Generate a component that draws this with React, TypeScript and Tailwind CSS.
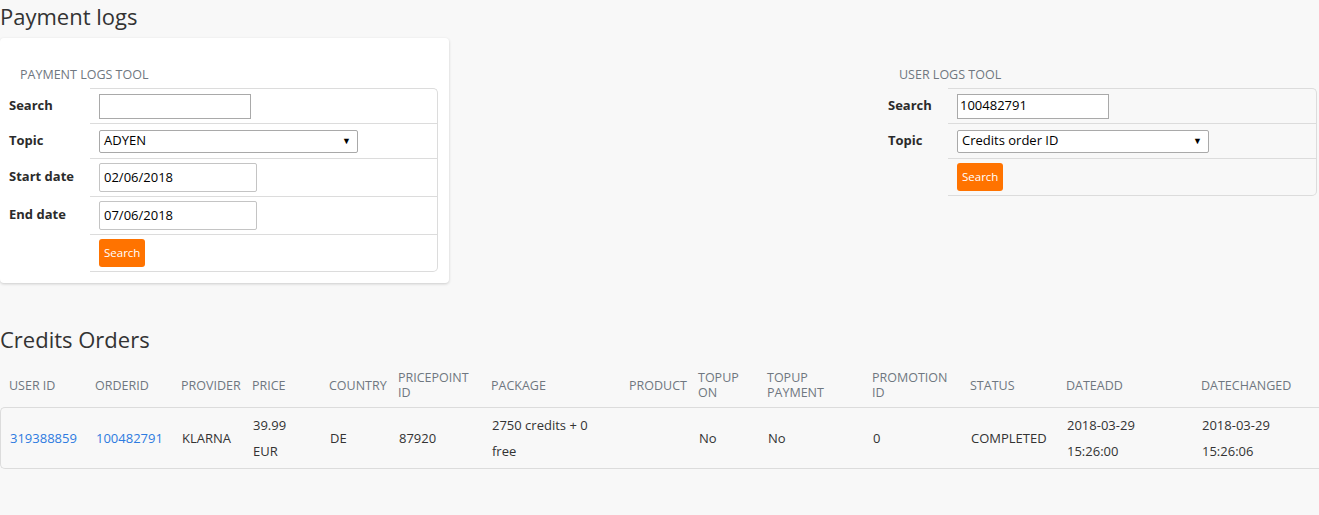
import React from 'react';

const font = { fontFamily: '"Open Sans", "Liberation Sans", sans-serif' };

type Field = { label: string; kind: 'input' | 'select' | 'date' | 'button'; value?: string; w?: string; h: string };

function Select({ value, w }: { value: string; w: string }) {
    return (
        <div className={`flex h-[23px] items-center justify-between rounded-[2px] border border-[#a9a9a9] bg-white pl-[4px] pr-[6px] text-[13px] text-black ${w}`}>
            <span>{value}</span>
            <span className="text-[9px]">▼</span>
        </div>
    );
}

function FieldRow({ f, labelW, last }: { f: Field; labelW: string; last: boolean }) {
    let control: React.ReactNode = null;
    if (f.kind === 'input') {
        control = (
            <div className={`flex h-[25px] items-center border border-[#a9a9a9] bg-white px-[2px] text-[13px] text-black ${f.w}`}>
                {f.value}
            </div>
        );
    } else if (f.kind === 'select') {
        control = <Select value={f.value ?? ''} w={f.w ?? ''} />;
    } else if (f.kind === 'date') {
        control = (
            <div className={`flex h-[29px] items-center rounded-[2px] border border-[#c4c4c4] bg-white px-[4px] text-[13px] text-black ${f.w}`}>
                {f.value}
            </div>
        );
    } else {
        control = (
            <button className="h-[28px] rounded-[3px] bg-[#ff7300] px-[5px] text-[11.5px] text-white">Search</button>
        );
    }
    return (
        <div className={`flex ${f.h}`}>
            <div className={`flex shrink-0 items-center pl-[9px] text-[13px] font-bold text-[#2b2b2b] ${labelW}`}>{f.label}</div>
            <div
                className={`flex flex-1 items-center border-r border-t border-[#dcdcdc] pl-[9px] ${
                    last ? 'border-b rounded-br-[5px]' : ''
                }`}
            >
                {control}
            </div>
        </div>
    );
}

function ToolForm({ title, fields, labelW }: { title: string; fields: Field[]; labelW: string }) {
    return (
        <div>
            <div className="pl-[20px] pt-[28px] pb-[4px] text-[12.5px] uppercase leading-[18px] text-[#6f7780]">{title}</div>
            <div className="[&>div:first-child>div:last-child]:rounded-tr-[5px]">
                {fields.map((f, i) => (
                    <FieldRow key={f.label + i} f={f} labelW={labelW} last={i === fields.length - 1} />
                ))}
            </div>
        </div>
    );
}

const cols = [
    ['USER ID'],
    ['ORDERID'],
    ['PROVIDER'],
    ['PRICE'],
    ['COUNTRY'],
    ['PRICEPOINT', 'ID'],
    ['PACKAGE'],
    ['PRODUCT'],
    ['TOPUP', 'ON'],
    ['TOPUP', 'PAYMENT'],
    ['PROMOTION', 'ID'],
    ['STATUS'],
    ['DATEADD'],
    ['DATECHANGED'],
];

const row: { v: string[]; link?: boolean }[] = [
    { v: ['319388859'], link: true },
    { v: ['100482791'], link: true },
    { v: ['KLARNA'] },
    { v: ['39.99', 'EUR'] },
    { v: ['DE'] },
    { v: ['87920'] },
    { v: ['2750 credits + 0', 'free'] },
    { v: [''] },
    { v: ['No'] },
    { v: ['No'] },
    { v: ['0'] },
    { v: ['COMPLETED'] },
    { v: ['2018-03-29', '15:26:00'] },
    { v: ['2018-03-29', '15:26:06'] },
];

const grid = 'grid grid-cols-[86px_86px_71px_77px_69px_93px_138px_69px_69px_105px_98px_96px_135px_127px]';

export default function App() {
    return (
        <div className="min-h-[515px] w-[1319px] bg-[#f8f8f8] text-[#333]" style={font}>
            <h1 className="pt-[1px] text-[22px] leading-[30px] text-[#333]">Payment logs</h1>

            <div className="mt-[7px] flex items-start">
                <div className="h-[245px] w-[449px] rounded-[4px] bg-white pr-[11px] shadow-[0_1px_3px_rgba(0,0,0,0.18)]">
                    <ToolForm
                        title="Payment logs tool"
                        labelW="w-[90px]"
                        fields={[
                            { label: 'Search', kind: 'input', value: '', w: 'w-[152px]', h: 'h-[35px]' },
                            { label: 'Topic', kind: 'select', value: 'ADYEN', w: 'w-[259px]', h: 'h-[35px]' },
                            { label: 'Start date', kind: 'date', value: '02/06/2018', w: 'w-[158px]', h: 'h-[38px]' },
                            { label: 'End date', kind: 'date', value: '07/06/2018', w: 'w-[158px]', h: 'h-[38px]' },
                            { label: '', kind: 'button', h: 'h-[38px]' },
                        ]}
                    />
                </div>
                <div className="ml-[430px] w-[438px]">
                    <ToolForm
                        title="User logs tool"
                        labelW="w-[69px]"
                        fields={[
                            { label: 'Search', kind: 'input', value: '100482791', w: 'w-[152px]', h: 'h-[35px]' },
                            { label: 'Topic', kind: 'select', value: 'Credits order ID', w: 'w-[252px]', h: 'h-[35px]' },
                            { label: '', kind: 'button', h: 'h-[38px]' },
                        ]}
                    />
                </div>
            </div>

            <h2 className="mt-[41px] text-[22px] leading-[30px] text-[#333]">Credits Orders</h2>

            <div className={`${grid} mt-[12px] h-[38px] items-center text-[12.5px] leading-[15px] text-[#6f7780]`}>
                {cols.map((c, i) => (
                    <div key={i} className="pl-[9px]">
                        {c.map(l => (
                            <div key={l}>{l}</div>
                        ))}
                    </div>
                ))}
            </div>

            <div className={`${grid} mt-[3px] h-[62px] items-center rounded-l-[5px] border-y border-l border-[#dcdcdc] text-[13px] leading-[26px]`}>
                {row.map((c, i) => (
                    <div key={i} className={`pl-[9px] ${c.link ? 'text-[#2d7be0]' : 'text-[#333]'}`}>
                        {c.v.map((l, j) => (
                            <div key={j}>{l}</div>
                        ))}
                    </div>
                ))}
            </div>
        </div>
    );
}
